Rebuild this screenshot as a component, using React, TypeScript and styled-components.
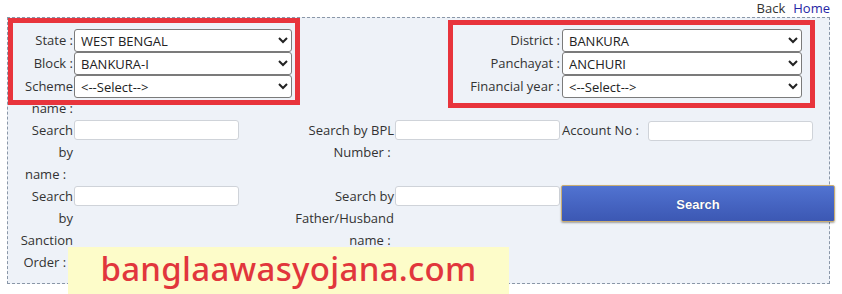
import styled, { createGlobalStyle } from 'styled-components';

const GlobalStyle = createGlobalStyle`
  html, body {
    margin: 0;
    padding: 0;
    background: #ffffff;
  }
  body {
    font-family: "Open Sans", "Noto Sans", Arial, sans-serif;
    font-size: 13px;
    color: #333333;
  }
`;

const Page = styled.div`
  position: relative;
  width: 842px;
  height: 294px;
  overflow: hidden;
`;

const TopLinks = styled.div`
  display: flex;
  justify-content: flex-end;
  align-items: flex-start;
  gap: 8px;
  height: 17px;
  padding-right: 12px;
  line-height: 17px;
  font-size: 13px;
`;

const TopLink = styled.a<{ $primary?: boolean }>`
  color: ${(p) => (p.$primary ? '#2626a4' : '#333333')};
  text-decoration: none;
  cursor: pointer;
`;

const Panel = styled.div`
  margin-left: 7px;
  width: 823px;
  box-sizing: border-box;
  border: 1px dashed #8a97a8;
  background: #eef2f8;
  padding: 11px 0 10px 7px;
`;

const TopGrid = styled.div`
  display: grid;
  grid-template-columns: 59px 218px 270px 240px;
  grid-auto-rows: auto;
`;

const BottomGrid = styled.div`
  display: grid;
  grid-template-columns: 59px 218px 103px 166px 87px 187px;
  width: 820px;
`;

const Label = styled.div`
  text-align: right;
  line-height: 22px;
  padding-right: 1px;
  white-space: nowrap;
`;

const WideLabel = styled(Label)`
  padding-right: 2px;
`;

const InlineLabel = styled(Label)`
  text-align: left;
  padding: 0 0 0 1px;
`;

const Select = styled.select`
  width: 100%;
  height: 23px;
  box-sizing: border-box;
  border: 1px solid #7b7b7b;
  border-radius: 3px;
  background: #ffffff;
  font-family: "Open Sans", "Noto Sans", Arial, sans-serif;
  font-size: 13px;
  color: #222222;
  padding: 0 2px;
  margin: 0;
`;

const TextInput = styled.input`
  width: 165px;
  height: 20px;
  box-sizing: border-box;
  border: 1px solid #cfd3d9;
  border-radius: 3px;
  background: #ffffff;
  margin: 1px 0 0 0;
  padding: 0 3px;
`;

const AccountInput = styled(TextInput)`
  margin-top: 2px;
`;

const SearchButton = styled.button`
  grid-column: 5 / span 2;
  align-self: start;
  width: 274px;
  height: 37px;
  margin: 0;
  padding-top: 3px;
  border: 1px solid #c9ad73;
  border-radius: 2px;
  background: linear-gradient(#5173d1, #4462bf 60%, #3c58b3);
  box-shadow: 0 1px 2px rgba(0, 0, 0, 0.35);
  color: #ffffff;
  font-family: "Liberation Sans", Arial, sans-serif;
  font-weight: bold;
  font-size: 13px;
  text-shadow: 0 0 1px rgba(0, 0, 0, 0.4);
  cursor: pointer;
`;

const Highlight = styled.div<{ $left: number; $top: number; $w: number; $h: number }>`
  position: absolute;
  left: ${(p) => p.$left}px;
  top: ${(p) => p.$top}px;
  width: ${(p) => p.$w}px;
  height: ${(p) => p.$h}px;
  box-sizing: border-box;
  border: 5px solid #e8343c;
  pointer-events: none;
`;

const Watermark = styled.div`
  position: absolute;
  left: 68px;
  top: 247px;
  width: 441px;
  height: 50px;
  background: #fdfcc9;
  color: #e1363c;
  font-family: "Noto Sans", "Open Sans", sans-serif;
  font-weight: 500;
  font-size: 33px;
  line-height: 44px;
  text-align: center;
  letter-spacing: 0.3px;
  box-sizing: border-box;
`;

export default function App() {
  return (
    <>
      <GlobalStyle />
      <Page>
        <TopLinks>
          <TopLink>Back</TopLink>
          <TopLink $primary>Home</TopLink>
        </TopLinks>
        <Panel>
          <TopGrid>
            <Label>State :</Label>
            <Select defaultValue="WEST BENGAL">
              <option>WEST BENGAL</option>
            </Select>
            <WideLabel>District :</WideLabel>
            <Select defaultValue="BANKURA">
              <option>BANKURA</option>
            </Select>

            <Label>Block :</Label>
            <Select defaultValue="BANKURA-I">
              <option>BANKURA-I</option>
            </Select>
            <WideLabel>Panchayat :</WideLabel>
            <Select defaultValue="ANCHURI">
              <option>ANCHURI</option>
            </Select>

            <Label>
              Scheme
              <br />
              name :
            </Label>
            <div>
              <Select>
                <option>{'<--Select-->'}</option>
              </Select>
            </div>
            <WideLabel>Financial year :</WideLabel>
            <div>
              <Select>
                <option>{'<--Select-->'}</option>
              </Select>
            </div>
          </TopGrid>

          <BottomGrid>
            <Label>
              Search
              <br />
              by
              <br />
              name :{'\u00a0\u00a0'}
            </Label>
            <div>
              <TextInput />
            </div>
            <Label>
              Search by BPL
              <br />
              Number :{'\u00a0'}
            </Label>
            <div>
              <TextInput />
            </div>
            <InlineLabel>Account No :</InlineLabel>
            <div>
              <AccountInput />
            </div>

            <Label>
              Search
              <br />
              by
              <br />
              Sanction
              <br />
              Order :{'\u00a0\u00a0'}
            </Label>
            <div>
              <TextInput />
            </div>
            <Label>
              Search by
              <br />
              Father/Husband
              <br />
              name :{'\u00a0'}
            </Label>
            <div>
              <TextInput />
            </div>
            <SearchButton>Search</SearchButton>
          </BottomGrid>
        </Panel>

        <Highlight $left={8} $top={18} $w={292} $h={87} />
        <Highlight $left={448} $top={20} $w={367} $h={88} />
        <Watermark>banglaawasyojana.com</Watermark>
      </Page>
    </>
  );
}
